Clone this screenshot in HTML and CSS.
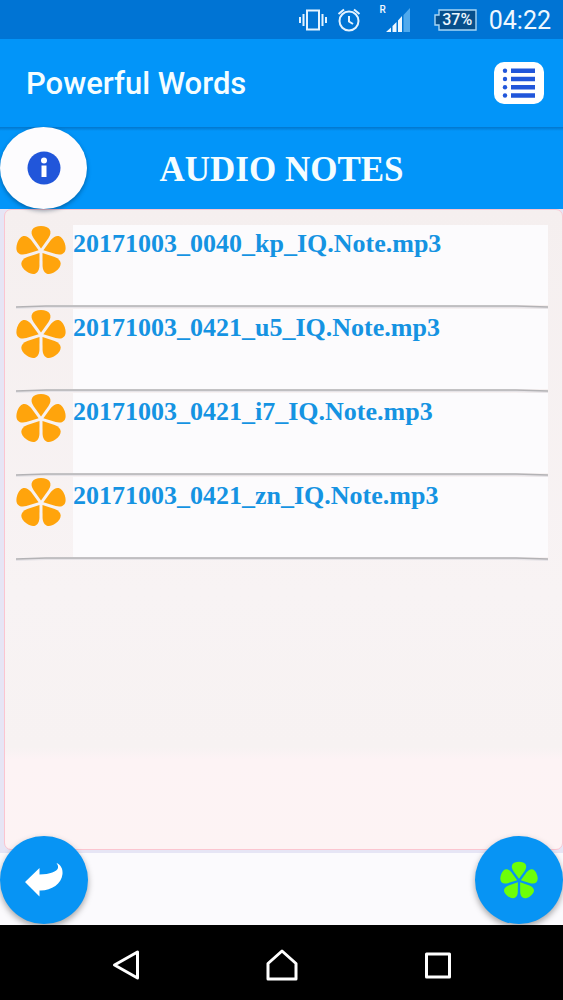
FILE: index.html
```
<!DOCTYPE html>
<html lang="en">
<head>
<meta charset="utf-8">
<meta name="viewport" content="width=device-width, initial-scale=1">
<title>Powerful Words</title>
<link rel="stylesheet" href="styles.css">
</head>
<body>
<svg class="defs" aria-hidden="true">
  <defs>
    <path id="petal" d="M0 -2.500L-7.500 -13C-12 -20 -8.500 -25 0 -25C8.500 -25 12 -20 7.500 -13Z"/>
    <symbol id="flower" viewBox="-25 -26 50 50">
      <use href="#petal"/>
      <use href="#petal" transform="rotate(72)"/>
      <use href="#petal" transform="rotate(144)"/>
      <use href="#petal" transform="rotate(216)"/>
      <use href="#petal" transform="rotate(288)"/>
    </symbol>
    <symbol id="rule" viewBox="0 0 532 4" preserveAspectRatio="none">
      <path d="M0 4V2L30 1H500L532 2V4L500 3H30Z" fill="#e6e3e7"/>
      <path d="M0 2L30 1H500L532 2" fill="none" stroke="#b3b2b5" stroke-width="1.3"/>
    </symbol>
  </defs>
</svg>
<div class="screen">
  <div class="status">
    <svg class="vibrate" width="30" height="24" viewBox="0 0 30 24" fill="none" stroke="#e4f3ff" stroke-width="2"><path d="M9 2.500h12v19H9z"/><path d="M5.500 6v12M2 9v6M24.500 6v12M28 9v6" stroke-width="2"/></svg>
    <svg class="alarm" width="24" height="24" viewBox="0 0 24 24" fill="none" stroke="#e4f3ff" stroke-width="2"><circle cx="12" cy="13" r="9.500"/><path d="M12 8v5.500l4 2.500M1.500 6L7 1.500M22.500 6L17 1.500"/></svg>
    <div class="signal">
      <span class="roaming">R</span>
      <svg width="24" height="24" viewBox="0 0 24 24" fill="#eef8ff"><path d="M0 24L5 19.500V24zM6.500 18L10.500 14V24h-4zM12 12.500L16 8V24h-4z"/><path d="M17.500 7L24 0V24h-6.500z" fill="#4fa9ed"/></svg>
    </div>
    <div class="battery">
      <svg width="43" height="22" viewBox="0 0 43 22"><path d="M5 1H42V21H5V16H1V6H5Z" fill="#064f8c" stroke="#a8d6f5" stroke-width="1.400"/></svg>
      <span class="percent">37%</span>
    </div>
    <time class="clock">04:22</time>
  </div>
  <header class="appbar">
    <h1 class="app-title">Powerful Words</h1>
    <button class="menu" aria-label="Menu">
      <svg width="34" height="32" viewBox="0 0 34 32" fill="#2156da"><path d="M9 1.500h24v4.500H9zM9 9.800h24v4.400H9zM9 18h24v4.500H9zM9 26.300h24v4.400H9z"/><circle cx="3" cy="3.800" r="2.200"/><circle cx="3" cy="12" r="2.200"/><circle cx="3" cy="20.300" r="2.200"/><circle cx="3" cy="28.500" r="2.200"/></svg>
    </button>
  </header>
  <div class="heading">
    <button class="info" aria-label="Information">
      <svg width="34" height="34" viewBox="0 0 34 34"><circle cx="17" cy="17" r="16.500" fill="#2156da"/><circle cx="17" cy="9.500" r="3" fill="#fff"/><path d="M14.500 14.500h5V26h-5z" fill="#fff"/></svg>
    </button>
    <h2 class="title">AUDIO NOTES</h2>
  </div>
  <main class="content">
    <section class="panel">
      <ul class="notes">
        <li class="note"><div class="row"><svg class="flower"><use href="#flower"/></svg><span class="name">20171003_0040_kp_IQ.Note.mp3</span></div><svg class="rule"><use href="#rule"/></svg></li>
        <li class="note"><div class="row"><svg class="flower"><use href="#flower"/></svg><span class="name">20171003_0421_u5_IQ.Note.mp3</span></div><svg class="rule"><use href="#rule"/></svg></li>
        <li class="note"><div class="row"><svg class="flower"><use href="#flower"/></svg><span class="name">20171003_0421_i7_IQ.Note.mp3</span></div><svg class="rule"><use href="#rule"/></svg></li>
        <li class="note"><div class="row"><svg class="flower"><use href="#flower"/></svg><span class="name">20171003_0421_zn_IQ.Note.mp3</span></div><svg class="rule"><use href="#rule"/></svg></li>
      </ul>
    </section>
  </main>
  <div class="actions">
    <button class="fab" aria-label="Back">
      <svg width="38" height="34" viewBox="0 0 38 34" fill="#fff"><path d="M0 19L14.500 5V11.500C25 11.500 32 8.500 33 5C33.400 3 32.500 1.500 31.500 0C36 2 38 6 37.500 11C36.500 21 26 28 14.500 27.500V33.500Z"/></svg>
    </button>
    <button class="fab" aria-label="New note">
      <svg class="clover"><use href="#flower"/></svg>
    </button>
  </div>
  <nav class="nav">
    <button class="key" aria-label="Back"><svg width="28" height="32" viewBox="0 0 28 32"><path d="M2.500 16L25.500 3V29Z"/></svg></button>
    <button class="key" aria-label="Home"><svg width="32" height="32" viewBox="0 0 32 32"><path d="M2 30V14.500L16 2L30 14.500V30Z"/></svg></button>
    <button class="key" aria-label="Recent apps"><svg width="28" height="28" viewBox="0 0 28 28"><path d="M2.500 3H25.500V26H2.500Z"/></svg></button>
  </nav>
</div>
</body>
</html>
```

FILE: styles.css
```
* {
  box-sizing: border-box;
}

body {
  margin: 0;
  font-family: Roboto, "Liberation Sans", sans-serif;
  background: #fbfafd;
}

button {
  display: grid;
  place-items: center;
  margin: 0;
  padding: 0;
  border: 0;
  background: none;
}

svg {
  display: block;
}

.defs {
  position: absolute;
  width: 0;
  height: 0;
}

.screen {
  display: flex;
  flex-direction: column;
  min-height: 100vh;
}

.status {
  display: flex;
  align-items: center;
  justify-content: flex-end;
  height: 39px;
  padding-right: 12px;
  background: #0074d4;
  color: #eef8ff;
}

.alarm {
  margin: 0 18px 0 9px;
}

.signal {
  display: flex;
  align-items: center;
  height: 32px;
}

.signal svg {
  align-self: flex-end;
  margin-bottom: 4px;
}

.roaming {
  align-self: flex-start;
  font-size: 10px;
  line-height: 12px;
  font-weight: 500;
}

.battery {
  display: grid;
  margin: 0 12px 0 24px;
}

.battery > * {
  grid-area: 1 / 1;
}

.percent {
  padding-left: 4px;
  font-size: 16px;
  line-height: 22px;
  font-weight: 500;
  text-align: center;
}

.clock {
  padding-top: 2px;
  font-size: 25px;
  line-height: 38px;
}

.appbar {
  display: flex;
  align-items: center;
  justify-content: space-between;
  height: 88px;
  padding: 0 19px 0 26px;
  background: #0295f9;
}

.app-title {
  margin: 0;
  padding-top: 2px;
  color: #f4fdff;
  font-size: 31px;
  line-height: 40px;
  font-weight: 500;
}

.menu {
  width: 50px;
  height: 42px;
  border-radius: 10px;
  background: #fff;
}

.heading {
  display: grid;
  align-items: center;
  height: 82px;
  background: linear-gradient(#0276cc, #0295f9 4px);
  z-index: 2;
}

.heading > * {
  grid-area: 1 / 1;
}

.info {
  width: 87px;
  height: 82px;
  border-radius: 50%;
  background: #fdfcfe;
  box-shadow: 0 2px 4px rgba(0, 30, 60, 0.4);
}

.title {
  margin: 0;
  padding-top: 4px;
  color: #f4fdff;
  font-family: "Liberation Serif", serif;
  font-size: 35px;
  line-height: 40px;
  text-align: center;
}

.content {
  display: flex;
  flex: 1;
  padding: 0 0 3px 4px;
  background: #e6e5f5;
}

.panel {
  flex: 1;
  padding: 15px 14px 0 11px;
  border: 1px solid #fbc5d0;
  border-radius: 7px;
  background: linear-gradient(#f5efef, #f8f3f4 60%, #f7f2f2 84%, #fdf3f5 86%, #fdf3f4);
}

.notes {
  margin: 0;
  padding: 0;
  list-style: none;
}

.row {
  display: grid;
  grid-template-columns: 57px 1fr;
  height: 80px;
}

.flower {
  width: 50px;
  height: 50px;
  fill: #ffa40c;
}

.name {
  background: #fcfbfd;
  color: #1593e2;
  font-family: "Liberation Serif", serif;
  font-size: 26px;
  line-height: 38px;
  font-weight: 700;
}

.rule {
  width: 100%;
  height: 4px;
}

.actions {
  display: flex;
  align-items: flex-end;
  justify-content: space-between;
  height: 72px;
  background: #fbfafd;
}

.fab {
  width: 88px;
  height: 88px;
  margin-bottom: 1px;
  border-radius: 50%;
  background: #0794f4;
  box-shadow: 0 3px 6px rgba(0, 0, 0, 0.35);
}

.clover {
  width: 38px;
  height: 38px;
  fill: #6dff08;
}

.nav {
  display: flex;
  align-items: center;
  justify-content: center;
  gap: 100px;
  height: 75px;
  padding-top: 4px;
  background: #000;
  z-index: 1;
}

.key {
  width: 56px;
  height: 56px;
  fill: none;
  stroke: #fff;
  stroke-width: 3;
  stroke-linejoin: round;
}
```
